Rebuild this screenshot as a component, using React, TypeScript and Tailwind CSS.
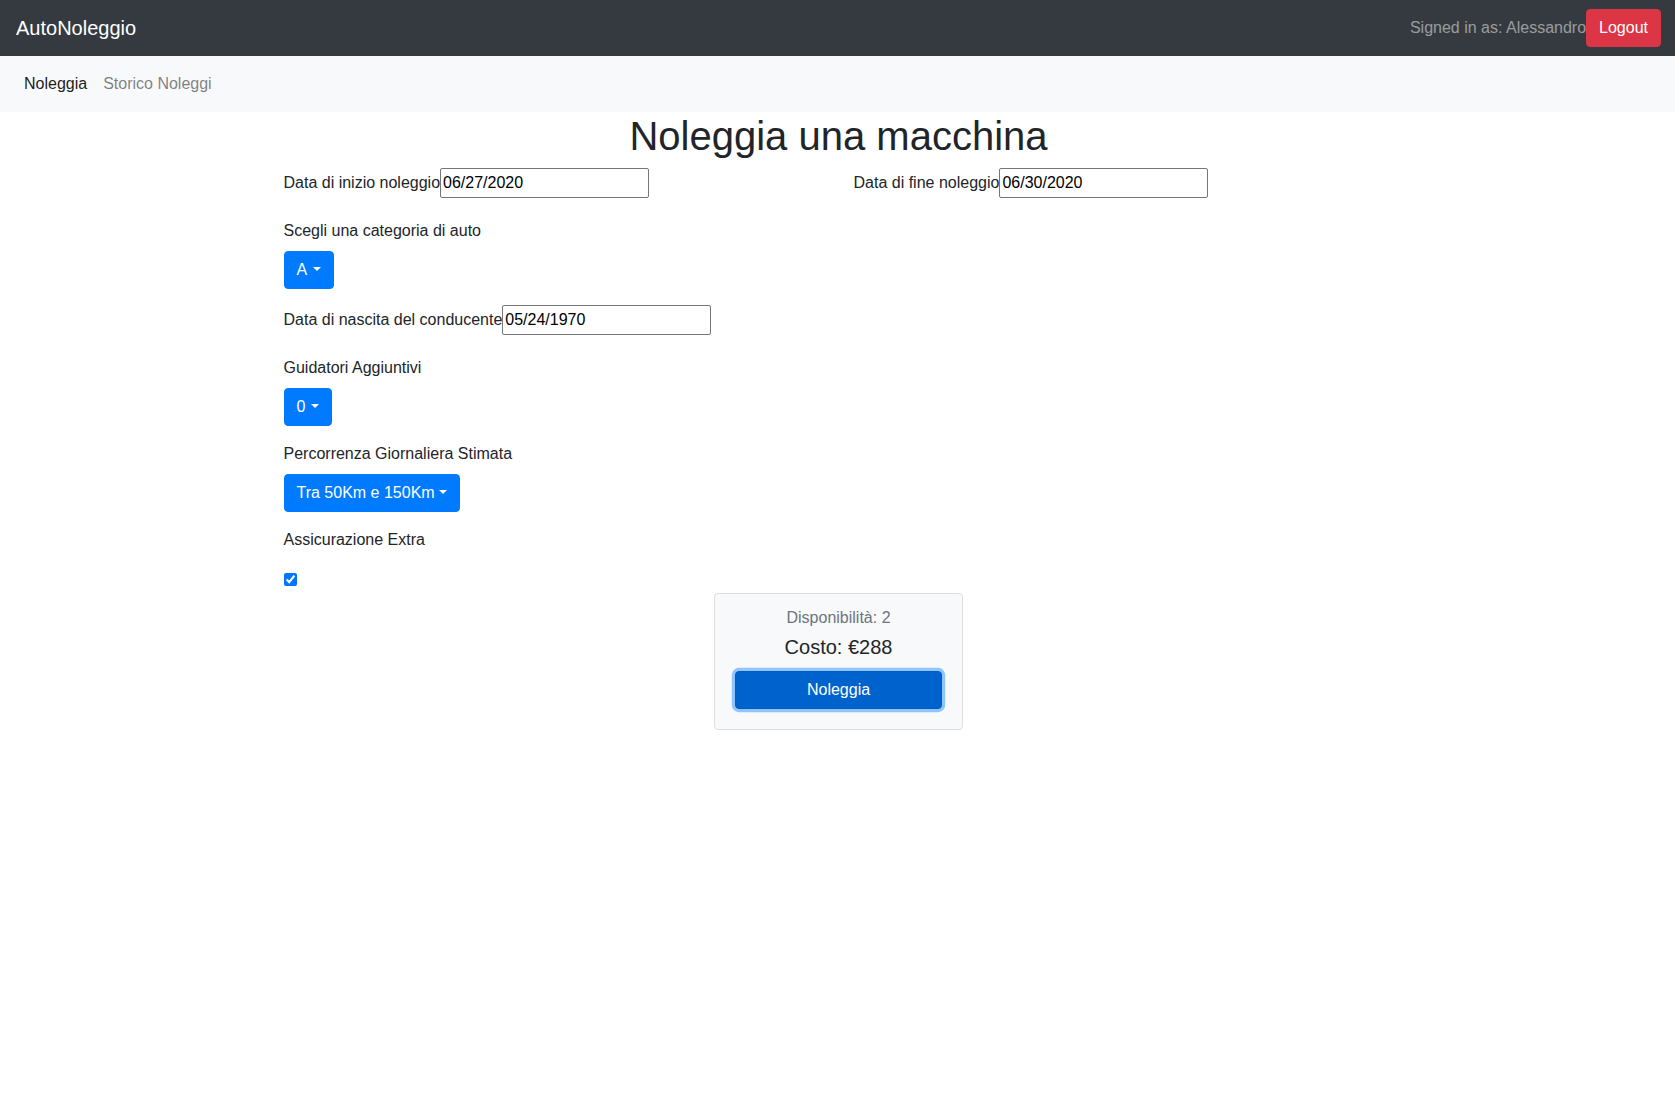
import React from 'react';

const Caret: React.FC<{ wide?: boolean }> = ({ wide }) => (
  <span
    className={`inline-block w-0 h-0 align-[0.255em] border-t-[0.3em] border-t-white border-x-[0.3em] border-x-transparent border-b-0 ${
      wide ? 'ml-[0.36em]' : 'ml-[0.255em]'
    }`}
  />
);

const DropButton: React.FC<{ label: string }> = ({ label }) => (
  <button
    type="button"
    className="h-[38px] px-3 border border-[#007bff] bg-[#007bff] text-white text-base leading-6 rounded-[4px]"
  >
    {label}
    <Caret wide={label.length === 1} />
  </button>
);

const DateField: React.FC<{ label: string; value: string }> = ({ label, value }) => (
  <div className="flex items-center h-[30px]">
    <label className="leading-6">{label}</label>
    <input
      type="text"
      defaultValue={value}
      className="w-[209px] h-[30px] px-[2px] border border-[#767676] rounded-[2px] bg-white text-black text-base leading-6"
    />
  </div>
);

const App: React.FC = () => {
  return (
    <div className="min-h-screen bg-white text-[#212529] font-['Liberation_Sans',Arial,sans-serif] text-base leading-6">
      {/* Top bar */}
      <nav className="h-14 bg-[#343a40] flex items-center justify-between pl-4 pr-[14px]">
        <span className="text-white text-xl leading-[30px]">AutoNoleggio</span>
        <div className="flex items-center">
          <span className="text-white/50">Signed in as: Alessandro</span>
          <button
            type="button"
            className="h-[38px] px-3 border border-[#dc3545] bg-[#dc3545] text-white rounded-[4px]"
          >
            Logout
          </button>
        </div>
      </nav>

      {/* Secondary nav */}
      <nav className="h-14 bg-[#f8f9fa] flex items-center px-4">
        <a className="px-2 text-black/90">Noleggia</a>
        <a className="px-2 text-black/50">Storico Noleggi</a>
      </nav>

      <div className="w-[1140px] mx-auto pl-4 pr-[14px]">
        <h1 className="text-[40px] leading-[48px] font-medium text-center mb-2">Noleggia una macchina</h1>

        <div className="grid grid-cols-2 gap-x-[30px] mb-[21px]">
          <DateField label="Data di inizio noleggio" value="06/27/2020" />
          <DateField label="Data di fine noleggio" value="06/30/2020" />
        </div>

        <label className="block mb-2">Scegli una categoria di auto</label>
        <div className="mb-4">
          <DropButton label="A" />
        </div>

        <div className="mb-[21px]">
          <DateField label="Data di nascita del conducente" value="05/24/1970" />
        </div>

        <label className="block mb-2">Guidatori Aggiuntivi</label>
        <div className="mb-4">
          <DropButton label="0" />
        </div>

        <label className="block mb-2">Percorrenza Giornaliera Stimata</label>
        <div className="mb-4">
          <DropButton label="Tra 50Km e 150Km" />
        </div>

        <label className="block">Assicurazione Extra</label>
        <div className="pt-[21px] h-[41px] flex items-start">
          <input type="checkbox" defaultChecked className="w-[13px] h-[13px] m-0" />
        </div>

        {/* Summary card */}
        <div className="w-[249px] mx-auto border border-[#dfdfdf] rounded-[4px] bg-[#f8f9fa] px-5 pt-3 pb-5 text-center">
          <p className="text-[#6c757d]">Disponibilità: 2</p>
          <h5 className="mt-[5px] text-xl leading-6 font-medium">Costo: €288</h5>
          <button
            type="button"
            className="mt-3 w-full h-[38px] bg-[#0062cc] border border-[#005cbf] rounded-[4px] text-white shadow-[0_0_0_3.2px_rgba(38,143,255,0.5)]"
          >
            Noleggia
          </button>
        </div>
      </div>
    </div>
  );
};

export default App;
